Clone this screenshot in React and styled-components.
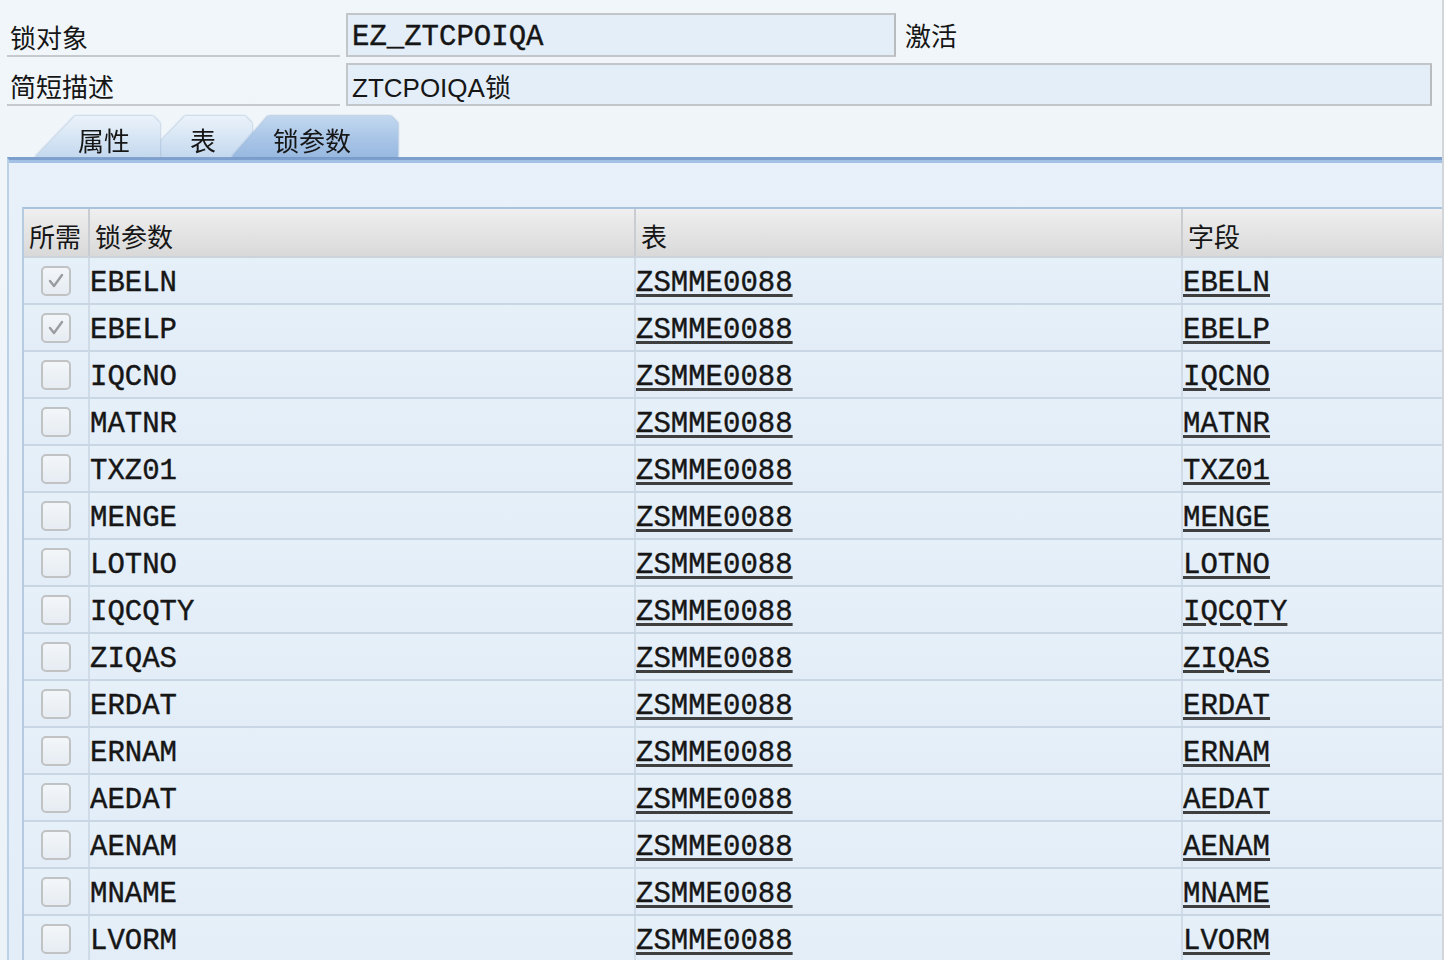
import React from 'react';
import styled, { createGlobalStyle } from 'styled-components';

const GlobalStyle = createGlobalStyle`
  html, body {
    margin: 0;
    padding: 0;
    background: #edf3f9;
    overflow: hidden;
  }
  #root {
    height: 960px;
  }
`

const CJK = `"Noto Sans CJK SC", "Liberation Sans", sans-serif`;
const MONO = `"Liberation Mono", "Noto Sans CJK SC", monospace`;

const Page = styled.div`
  width: 1444px;
  height: 960px;
  overflow: hidden;
  background: linear-gradient(180deg, #f1f6fa 0%, #ebf2f8 100%);
  border-right: 2px solid #d2d6da;
  box-sizing: border-box;
  color: #161616;
`

const Form = styled.div`
  padding-top: 13px;
  display: flex;
  flex-direction: column;
  gap: 6px;
`

const FormRow = styled.div`
  display: flex;
  align-items: stretch;
  height: ${p => p.h}px;
`

const Label = styled.div`
  width: 333px;
  margin-left: 7px;
  border-bottom: 2px solid #c6cacf;
  display: flex;
  align-items: flex-end;
  padding-left: 3px;
  box-sizing: border-box;
  font-family: ${CJK};
  font-size: 26px;
  line-height: 36px;
`

const Field = styled.div`
  margin-left: 6px;
  width: ${p => p.w}px;
  box-sizing: border-box;
  border: 2px solid #c3c6c9;
  border-right-color: #b9bcbf;
  background: #e3eef8;
  display: flex;
  align-items: center;
  padding-left: 4px;
  padding-top: ${p => (p.mono ? 5 : 1)}px;
  font-family: ${p => (p.mono ? MONO : `"Liberation Sans", "Noto Sans CJK SC", sans-serif`)};
  font-size: ${p => (p.mono ? 29 : 26)}px;
  -webkit-text-stroke: ${p => (p.mono ? '0.4px #161616' : '0')};
  white-space: nowrap;
`

const Status = styled.div`
  margin-left: 9px;
  font-family: ${CJK};
  font-size: 26px;
  display: flex;
  align-items: center;
  padding-bottom: 2px;
`

const TabStrip = styled.div`
  display: flex;
  margin-top: 10px;
  margin-left: 35px;
  height: 41px;
`

const TabWrap = styled.div`
  position: relative;
  z-index: ${p => p.z};
  margin-left: ${p => p.ml}px;
  width: ${p => p.w}px;
  filter: drop-shadow(0 0 0.8px ${p => (p.active ? '#6f93c2' : '#8eaacb')});
`

const TabShape = styled.div`
  height: 41px;
  clip-path: polygon(${p => p.slant}px 0, calc(100% - 7px) 0, 100% 7px, 100% 100%, 0 100%);
  background: ${p => p.active
    ? 'linear-gradient(180deg, #c3d8ef 0%, #a8c5e7 55%, #99b9e0 100%)'
    : 'linear-gradient(180deg, #eaf2fa 0%, #d6e5f4 55%, #c4d8ee 100%)'};
  padding-left: ${p => p.pl}px;
  box-sizing: border-box;
  font-family: ${CJK};
  font-size: 26px;
  line-height: 48px;
  white-space: nowrap;
`

const Panel = styled.div`
  margin-left: 7px;
  height: 800px;
  border-top: 3px solid #7c9fcd;
  border-left: 2px solid #bcd0e6;
  box-shadow: inset 0 3px 0 #a3c1e5;
  background: linear-gradient(180deg, #e8f1f9 0%, #e3edf8 100%);
  padding-top: 47px;
  padding-left: 13px;
`

const Table = styled.div`
  border-top: 2px solid #a9c2dd;
  border-left: 2px solid #b7cbe0;
  width: 1440px;
`

const Grid = styled.div`
  display: grid;
  grid-template-columns: 64px 546px 547px 1fr;
  height: ${p => p.h}px;
  box-sizing: border-box;
  border-bottom: 2px solid ${p => (p.head ? '#cdd3da' : '#c9d6e4')};
  background: ${p => p.head
    ? 'linear-gradient(180deg, #efefef 0%, #e4e4e4 50%, #d9d9da 100%)'
    : 'linear-gradient(180deg, #e6f0f9 0%, #e2edf8 100%)'};
`

const HeadCell = styled.div`
  display: flex;
  align-items: center;
  padding-left: 5px;
  padding-top: 6px;
  border-left: ${p => (p.first ? 'none' : '2px solid #c9ccd0')};
  font-family: ${CJK};
  font-size: 26px;
  white-space: nowrap;
  overflow: hidden;
`

const Cell = styled.div`
  display: flex;
  align-items: center;
  justify-content: ${p => (p.center ? 'center' : 'flex-start')};
  padding-top: ${p => (p.center ? 0 : 5)}px;
  border-left: ${p => (p.first ? 'none' : '2px solid #cfdbe7')};
  font-family: ${MONO};
  font-size: 29px;
  -webkit-text-stroke: 0.4px #161616;
  white-space: nowrap;
  overflow: hidden;
`

const Link = styled.span`
  text-decoration: underline;
  text-decoration-thickness: 3px;
  text-decoration-color: #3f3f3f;
  text-underline-offset: 3px;
`

const Box = styled.div`
  width: 30px;
  height: 30px;
  box-sizing: border-box;
  border: 2px solid #c0c2c4;
  border-radius: 5px;
  background: linear-gradient(180deg, #f3f6f9 0%, #e6ecf2 100%);
  display: flex;
  align-items: center;
  justify-content: center;
`

const Check = ({ on }) => (
  <Box>
    {on && (
      <svg width="20" height="20" viewBox="0 0 20 20">
        <polyline points="4,10 8,15 16,4" fill="none" stroke="#9a9c9f" strokeWidth="2.4" strokeLinejoin="round" strokeLinecap="round" />
      </svg>
    )}
  </Box>
);

const rows = [
  ['EBELN', true], ['EBELP', true], ['IQCNO'], ['MATNR'], ['TXZ01'], ['MENGE'],
  ['LOTNO'], ['IQCQTY'], ['ZIQAS'], ['ERDAT'], ['ERNAM'], ['AEDAT'], ['AENAM'],
  ['MNAME'], ['LVORM'],
];

const tabs = [
  { text: '属性', w: 125, ml: 0, slant: 40, pl: 43, z: 2 },
  { text: '表', w: 107, ml: -15, slant: 40, pl: 45, z: 1 },
  { text: '锁参数', w: 166, ml: -20, slant: 36, pl: 41, z: 3, active: true },
];

export default function App() {
  return (
    <Page>
      <GlobalStyle />
      <Form>
        <FormRow h={44}>
          <Label>锁对象</Label>
          <Field w={550} mono>EZ_ZTCPOIQA</Field>
          <Status>激活</Status>
        </FormRow>
        <FormRow h={43}>
          <Label>简短描述</Label>
          <Field w={1086}>ZTCPOIQA锁</Field>
        </FormRow>
      </Form>
      <TabStrip>
        {tabs.map(t => (
          <TabWrap key={t.text} w={t.w} ml={t.ml} z={t.z} active={t.active}>
            <TabShape slant={t.slant} pl={t.pl} active={t.active}>{t.text}</TabShape>
          </TabWrap>
        ))}
      </TabStrip>
      <Panel>
        <Table>
          <Grid head h={49}>
            <HeadCell first>所需</HeadCell>
            <HeadCell>锁参数</HeadCell>
            <HeadCell>表</HeadCell>
            <HeadCell>字段</HeadCell>
          </Grid>
          {rows.map(([name, on]) => (
            <Grid key={name} h={47}>
              <Cell first center><Check on={on} /></Cell>
              <Cell>{name}</Cell>
              <Cell><Link>ZSMME0088</Link></Cell>
              <Cell><Link>{name}</Link></Cell>
            </Grid>
          ))}
        </Table>
      </Panel>
    </Page>
  );
}
